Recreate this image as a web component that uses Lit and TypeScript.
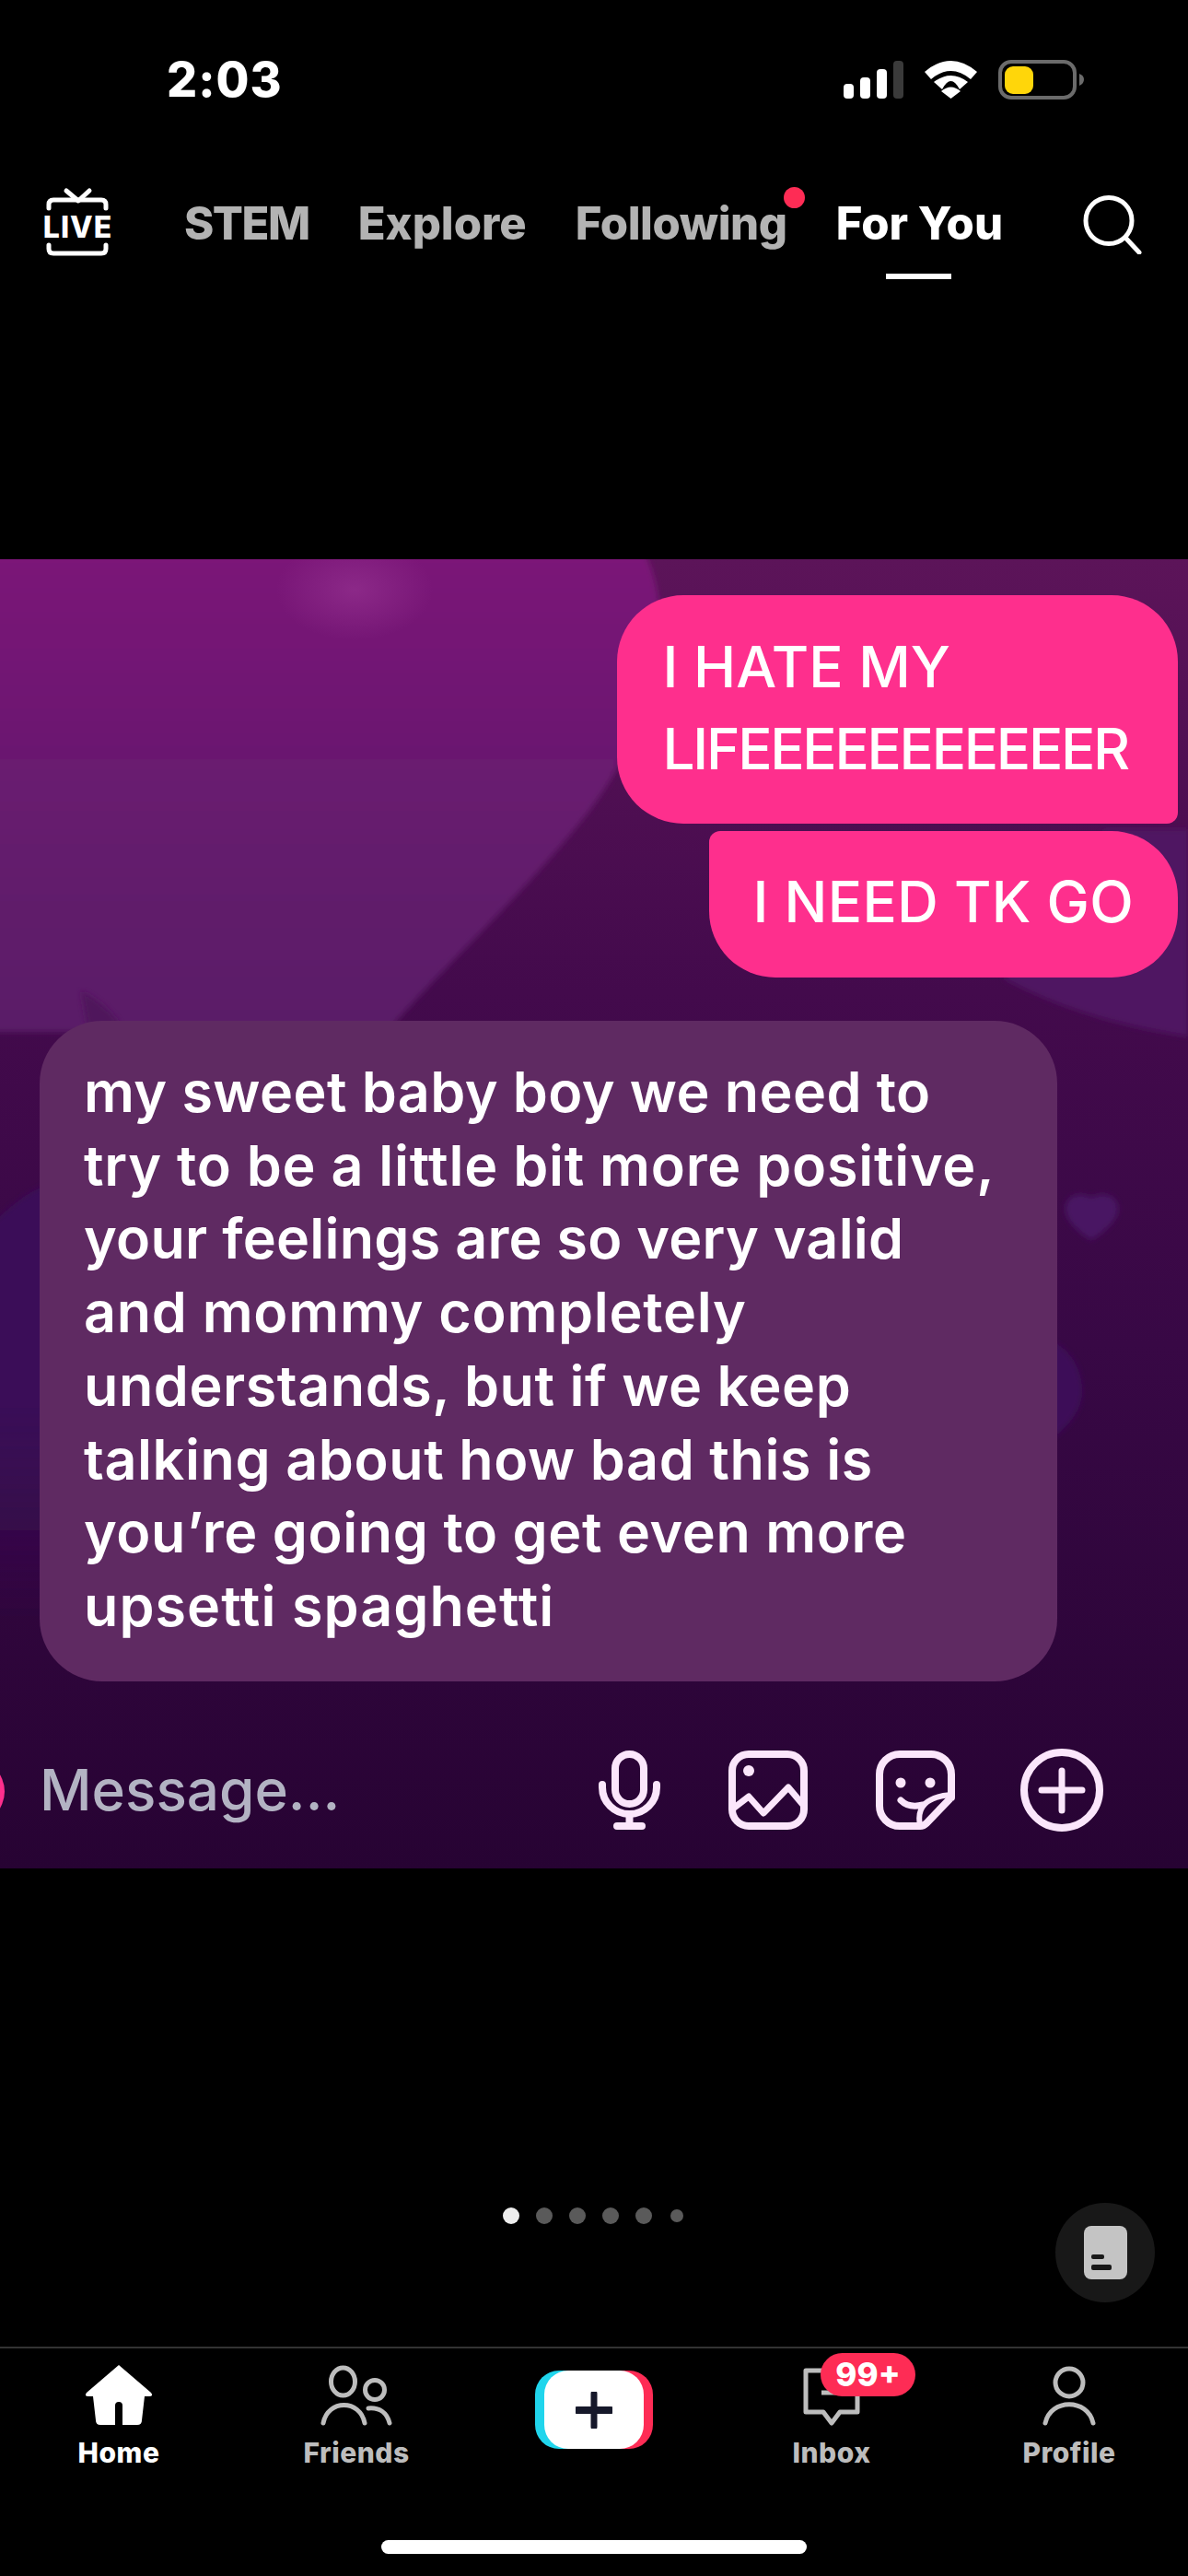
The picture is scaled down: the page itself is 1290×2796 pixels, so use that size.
import { LitElement, html, css } from "lit";
import { customElement } from "lit/decorators.js";

const INCOMING: [string, number][] = [
  ["my sweet baby boy we need to", 0.42],
  ["try to be a little bit more positive,", 0.75],
  ["your feelings are so very valid", 0.26],
  ["and mommy completely", 0.73],
  ["understands, but if we keep", 0.55],
  ["talking about how bad this is", 0.6],
  ["you’re going to get even more", 0.58],
  ["upsetti spaghetti", 1.05],
];

@customElement("app-root")
export class AppRoot extends LitElement {
  static styles = css`
    :host { display: block; width: 1290px; height: 2796px; background: #000; color: #fff; font-family: Inter, "Liberation Sans", sans-serif; overflow: hidden; }
    svg { display: block; flex: none; }
    .status { height: 203px; display: flex; align-items: flex-start; justify-content: space-between; padding: 57px 113px 0 181px; box-sizing: border-box; }
    .status svg { margin-top: 7px; }
    .time { font-size: 52px; font-weight: 800; line-height: 60px; letter-spacing: 1px; }
    .top { height: 404px; display: flex; align-items: flex-start; padding-left: 47px; box-sizing: border-box; }
    .tabs { display: flex; gap: 53px; margin-left: 79px; margin-top: 10px; }
    .tab { position: relative; font-size: 49px; font-weight: 800; line-height: 60px; color: #b3b3b3; white-space: nowrap; }
    .tab.tight { letter-spacing: -1.5px; }
    .tab.on { color: #fff; }
    .tab.on::after { content: ""; position: absolute; left: 54px; top: 84px; width: 71px; height: 6px; background: #fff; }
    .tab.dot { letter-spacing: -0.45px; }
    .tab.dot::after { content: ""; position: absolute; right: -19px; top: -10px; width: 23px; height: 23px; border-radius: 50%; background: #fe2c55; }
    .search { margin-left: 87px; margin-top: 7px; }

    .video { position: relative; height: 1421px; display: flex; flex-direction: column; overflow: hidden; }
    .bg { position: absolute; left: 0; top: 0; }
    .bubble { position: relative; box-sizing: border-box; font-weight: 500; color: #fff; }
    .out { align-self: flex-end; margin-right: 11px; background: #fe2f8d; font-size: 62px; line-height: 89px; white-space: nowrap; }
    .squeeze { letter-spacing: -2.3px; }
    .b1 { margin-top: 39px; padding: 33px 54px 37px 50px; border-radius: 72px 72px 12px 72px; }
    .b2 { margin-top: 8px; padding: 32px 48px 38px 48px; letter-spacing: 0.3px; border-radius: 12px 72px 72px 72px; }
    .in { margin: 47px 0 0 43px; width: 1105px; height: 717px; padding: 38px 0 0 48px; background: #5f2a62; border-radius: 68px; font-size: 61px; font-weight: 600; line-height: 79.7px; }
    .in span { display: block; white-space: nowrap; }
    .compose { position: relative; display: flex; align-items: center; gap: 71px; margin-top: 70px; height: 96px; padding-right: 92px; }
    .compose .msg { margin: 0 auto 2px 43px; font-size: 62px; font-weight: 500; color: #b3b3c3; }
    .avatar { position: absolute; left: -66px; top: 14px; width: 71px; height: 71px; border-radius: 50%; background: #fe2f8d; }

    .dots { height: 0; display: flex; align-items: center; justify-content: center; gap: 18px; position: relative; top: 377px; left: -1px; }
    .dots i { width: 18px; height: 18px; border-radius: 50%; background: #5a5a5a; }
    .dots i.first { background: #eee; }
    .dots i.last { width: 14px; height: 14px; margin-left: 2px; }
    .fab { position: relative; margin: 363px 36px 0 auto; width: 108px; height: 108px; border-radius: 50%; background: #181818; display: flex; align-items: center; justify-content: center; }
    .bar { margin-top: 48px; border-top: 2px solid #333; display: grid; grid-template-columns: repeat(5, 1fr); height: 208px; box-sizing: border-box; }
    .item { position: relative; display: flex; flex-direction: column; align-items: center; color: #bdbdbd; font-size: 30px; font-weight: 800; }
    .item.on { color: #fff; }
    .item svg { margin-top: 16px; }
    .item span { line-height: 36px; margin-top: 11px; letter-spacing: 0.5px; }
    .create { position: relative; margin: 24px auto 0; width: 108px; height: 85px; border-radius: 26px; background: #fff; box-shadow: -10px 0 0 #20d5ec, 10px 0 0 #fe2c55; display: flex; align-items: center; justify-content: center; }
    .item .create svg { margin: 0; }
    .badge { position: absolute; left: 117px; top: 5px; width: 103px; height: 47px; border-radius: 24px; background: #fe2c55; color: #fff; font-size: 35px; font-weight: 800; line-height: 47px; text-align: center; }
    .indicator { width: 462px; height: 15px; border-radius: 8px; background: #fff; margin: 0 auto; position: relative; top: 2px; }
  `;

  private bg() {
    return html`<svg class="bg" width="1290" height="1421" viewBox="0 607 1290 1421">
      <defs>
        <linearGradient id="base" x1="0" y1="0" x2="0" y2="1">
          <stop offset="0" stop-color="#5c1459"/>
          <stop offset="0.33" stop-color="#430a4c"/>
          <stop offset="0.6" stop-color="#380845"/>
          <stop offset="1" stop-color="#270333"/>
        </linearGradient>
        <linearGradient id="blob" x1="0" y1="607" x2="0" y2="1108" gradientUnits="userSpaceOnUse">
          <stop offset="0" stop-color="#7b1878"/>
          <stop offset="0.5" stop-color="#681a6f"/>
          <stop offset="1" stop-color="#5a1a68"/>
        </linearGradient>
        <linearGradient id="fade" x1="0" y1="1285" x2="0" y2="1760" gradientUnits="userSpaceOnUse">
          <stop offset="0" stop-color="#3a1058"/>
          <stop offset="0.5" stop-color="#3a1058"/>
          <stop offset="1" stop-color="#3a1058" stop-opacity="0"/>
        </linearGradient>
        <radialGradient id="glow">
          <stop offset="0" stop-color="#8f2c8b" stop-opacity="0.85"/>
          <stop offset="1" stop-color="#8f2c8b" stop-opacity="0"/>
        </radialGradient>
        <filter id="soft"><feGaussianBlur stdDeviation="3"/></filter>
      </defs>
      <rect x="0" y="607" width="1290" height="1421" fill="url(#base)"/>
      <path filter="url(#soft)" d="M1090 1062C1150 1095 1220 1115 1290 1125V900H1200Z" fill="#4f1562"/>
      <path filter="url(#soft)" d="M-10 600H700C735 670 715 780 640 880C570 970 490 1040 420 1120H-10Z" fill="url(#blob)"/>
      <path filter="url(#soft)" d="M88 1075C105 1085 120 1095 132 1115H95Z" fill="#50135c"/>
      <ellipse cx="385" cy="640" rx="85" ry="55" fill="url(#glow)"/>
      <path filter="url(#soft)" d="M-10 1330C20 1300 50 1280 70 1285V1760H-10Z" fill="url(#fade)"/>
      <path filter="url(#soft)" d="M1185 1300C1195 1293 1214 1296 1214 1312C1214 1325 1198 1338 1185 1346C1172 1338 1157 1325 1157 1312C1157 1296 1175 1293 1185 1300Z" fill="#491663"/>
      <path filter="url(#soft)" d="M1140 1455C1165 1465 1175 1490 1175 1510C1175 1530 1160 1550 1140 1562Z" fill="#3e1158"/>
    </svg>`;
  }

  render() {
    return html`
      <div class="status">
        <div class="time">2:03</div>
        <svg width="261" height="44" viewBox="916 64 261 44">
          <rect x="916" y="91" width="11" height="16" rx="4" fill="#fff"/>
          <rect x="934" y="84" width="11" height="23" rx="4" fill="#fff"/>
          <rect x="952" y="75" width="11" height="32" rx="4" fill="#fff"/>
          <rect x="970" y="66" width="11" height="41" rx="4" fill="#3a3a3a"/>
          <g transform="translate(1004 66)" fill="#fff">
            <path d="M0 12Q28.5 -12 57 12L50 20Q28.5 2 7 20Z"/>
            <path d="M10 23Q28.5 9 47 23L38 31Q28.5 13 19 31Z"/>
            <path d="M18 33Q28.5 24 39 33L28.5 41Z"/>
          </g>
          <rect x="1086" y="67" width="81" height="39" rx="12" fill="none" stroke="#6b6b6b" stroke-width="4"/>
          <rect x="1091" y="72" width="31" height="30" rx="9" fill="#ffd60a"/>
          <path d="M1172 80Q1177 82 1177 86Q1177 91 1172 93Z" fill="#6b6b6b"/>
        </svg>
      </div>

      <div class="top">
        <svg width="74" height="75" viewBox="47 205 74 75" fill="none" stroke="#fff" stroke-width="5" stroke-linecap="round" stroke-linejoin="round">
          <path d="M72 209L85 220L97 209"/>
          <path d="M53 228V224Q53 219 58 219H110Q115 219 115 224V228"/>
          <path d="M53 268V272Q53 277 58 277H110Q115 277 115 272V268"/>
          <text x="84.5" y="260" text-anchor="middle" font-family="Inter, sans-serif" font-size="32" font-weight="800" letter-spacing="1" fill="#fff" stroke="none">LIVE</text>
        </svg>
        <div class="tabs">
          <div class="tab tight">STEM</div>
          <div class="tab">Explore</div>
          <div class="tab dot">Following</div>
          <div class="tab on">For You</div>
        </div>
        <svg class="search" width="64" height="66" viewBox="1175 210 64 66" fill="none" stroke="#fff" stroke-width="5" stroke-linecap="round">
          <circle cx="1203" cy="239.5" r="25"/>
          <path d="M1222 259L1236 274"/>
        </svg>
      </div>

      <div class="video">
        ${this.bg()}
        <div class="bubble out b1">I HATE MY<br><span class="squeeze">LIFEEEEEEEEEEER</span></div>
        <div class="bubble out b2">I NEED TK GO</div>
        <div class="bubble in">${INCOMING.map(([l, t]) => html`<span style="letter-spacing:${t}px">${l}</span>`)}</div>
        <div class="compose">
          <div class="avatar"></div>
          <div class="msg">Message...</div>
          <svg width="69" height="96" viewBox="648 1894 69 96" fill="none" stroke="#fbe6fb" stroke-width="8" stroke-linecap="round">
            <rect x="668" y="1903" width="31" height="54" rx="15.5"/>
            <path d="M654 1936V1939A29.5 29 0 0 0 713 1939V1936"/>
            <path d="M683.5 1968V1981M670 1981H697"/>
          </svg>
          <svg width="92" height="96" viewBox="788 1894 92 96" fill="none" stroke="#fbe6fb" stroke-width="7" stroke-linejoin="round">
            <rect x="795" y="1903" width="78" height="78" rx="18" stroke-width="8"/>
            <circle cx="813" cy="1921" r="6" fill="#fbe6fb" stroke="none"/>
            <path d="M796 1962L813 1949L829 1967L856 1939L872 1958"/>
          </svg>
          <svg width="86" height="96" viewBox="951 1894 86 96" fill="none" stroke="#fbe6fb" stroke-width="8" stroke-linecap="round" stroke-linejoin="round">
            <path d="M1033 1950V1925A22 22 0 0 0 1011 1903H977A22 22 0 0 0 955 1925V1959A22 22 0 0 0 977 1981H999Q1003 1981 1006 1978L1030 1953Q1033 1950 1033 1947"/>
            <path d="M999 1980Q993 1950 1033 1947" stroke-width="6"/>
            <path d="M978 1953Q987 1962 1002 1958" stroke-width="7"/>
            <circle cx="978" cy="1934" r="5.5" fill="#fbe6fb" stroke="none"/>
            <circle cx="1010" cy="1934" r="5.5" fill="#fbe6fb" stroke="none"/>
          </svg>
          <svg width="90" height="96" viewBox="1108 1894 90 96" fill="none" stroke="#fbe6fb" stroke-width="8" stroke-linecap="round">
            <circle cx="1153" cy="1942" r="41"/>
            <path d="M1131 1942H1175M1153 1921V1964" stroke-width="7"/>
          </svg>
        </div>
      </div>

      <div class="dots"><i class="first"></i><i></i><i></i><i></i><i></i><i class="last"></i></div>
      <div class="fab">
        <svg width="47" height="58" viewBox="0 0 47 58">
          <rect width="47" height="58" rx="8" fill="#c4c4c4"/>
          <rect x="8" y="31" width="14" height="5" rx="2" fill="#181818"/>
          <rect x="8" y="42" width="22" height="6" rx="2" fill="#181818"/>
        </svg>
      </div>

      <div class="bar">
        <div class="item on">
          <svg width="76" height="68" viewBox="90 2565 76 68" fill="#fff">
            <path d="M128 2567L163 2597Q166 2601 161 2601H156L153 2627Q153 2632 148 2632H132V2611Q132 2607 128 2607Q124 2607 124 2611V2632H108Q103 2632 103 2627L100 2601H95Q90 2601 93 2597Z"/>
          </svg>
          <span>Home</span>
        </div>
        <div class="item">
          <svg width="80" height="68" viewBox="348 2565 80 68" fill="none" stroke="#bdbdbd" stroke-width="5" stroke-linecap="round">
            <ellipse cx="373.5" cy="2585" rx="13" ry="15"/>
            <circle cx="408" cy="2594" r="10.5"/>
            <path d="M352 2630C357 2604 392 2604 397 2630"/>
            <path d="M401 2614C412 2613 421 2618 424 2630"/>
          </svg>
          <span>Friends</span>
        </div>
        <div class="item">
          <div class="create">
            <svg width="40" height="40" viewBox="0 0 40 40" fill="none" stroke="#16182a" stroke-linecap="round">
              <path d="M20 2V38" stroke-width="7"/>
              <path d="M2 20H38" stroke-width="8"/>
            </svg>
          </div>
        </div>
        <div class="item">
          <svg width="66" height="68" viewBox="870 2565 66 68" fill="none" stroke="#bdbdbd" stroke-width="5" stroke-linejoin="round">
            <path d="M875 2573H931V2618H912L903 2630L894 2618H875Z"/>
            <path d="M892 2597H914"/>
          </svg>
          <span>Inbox</span>
          <div class="badge">99+</div>
        </div>
        <div class="item">
          <svg width="58" height="68" viewBox="1132 2565 58 68" fill="none" stroke="#bdbdbd" stroke-width="5" stroke-linecap="round">
            <circle cx="1161" cy="2586" r="15"/>
            <path d="M1135 2630C1141 2603 1181 2603 1187 2630"/>
          </svg>
          <span>Profile</span>
        </div>
      </div>
      <div class="indicator"></div>
    `;
  }
}
